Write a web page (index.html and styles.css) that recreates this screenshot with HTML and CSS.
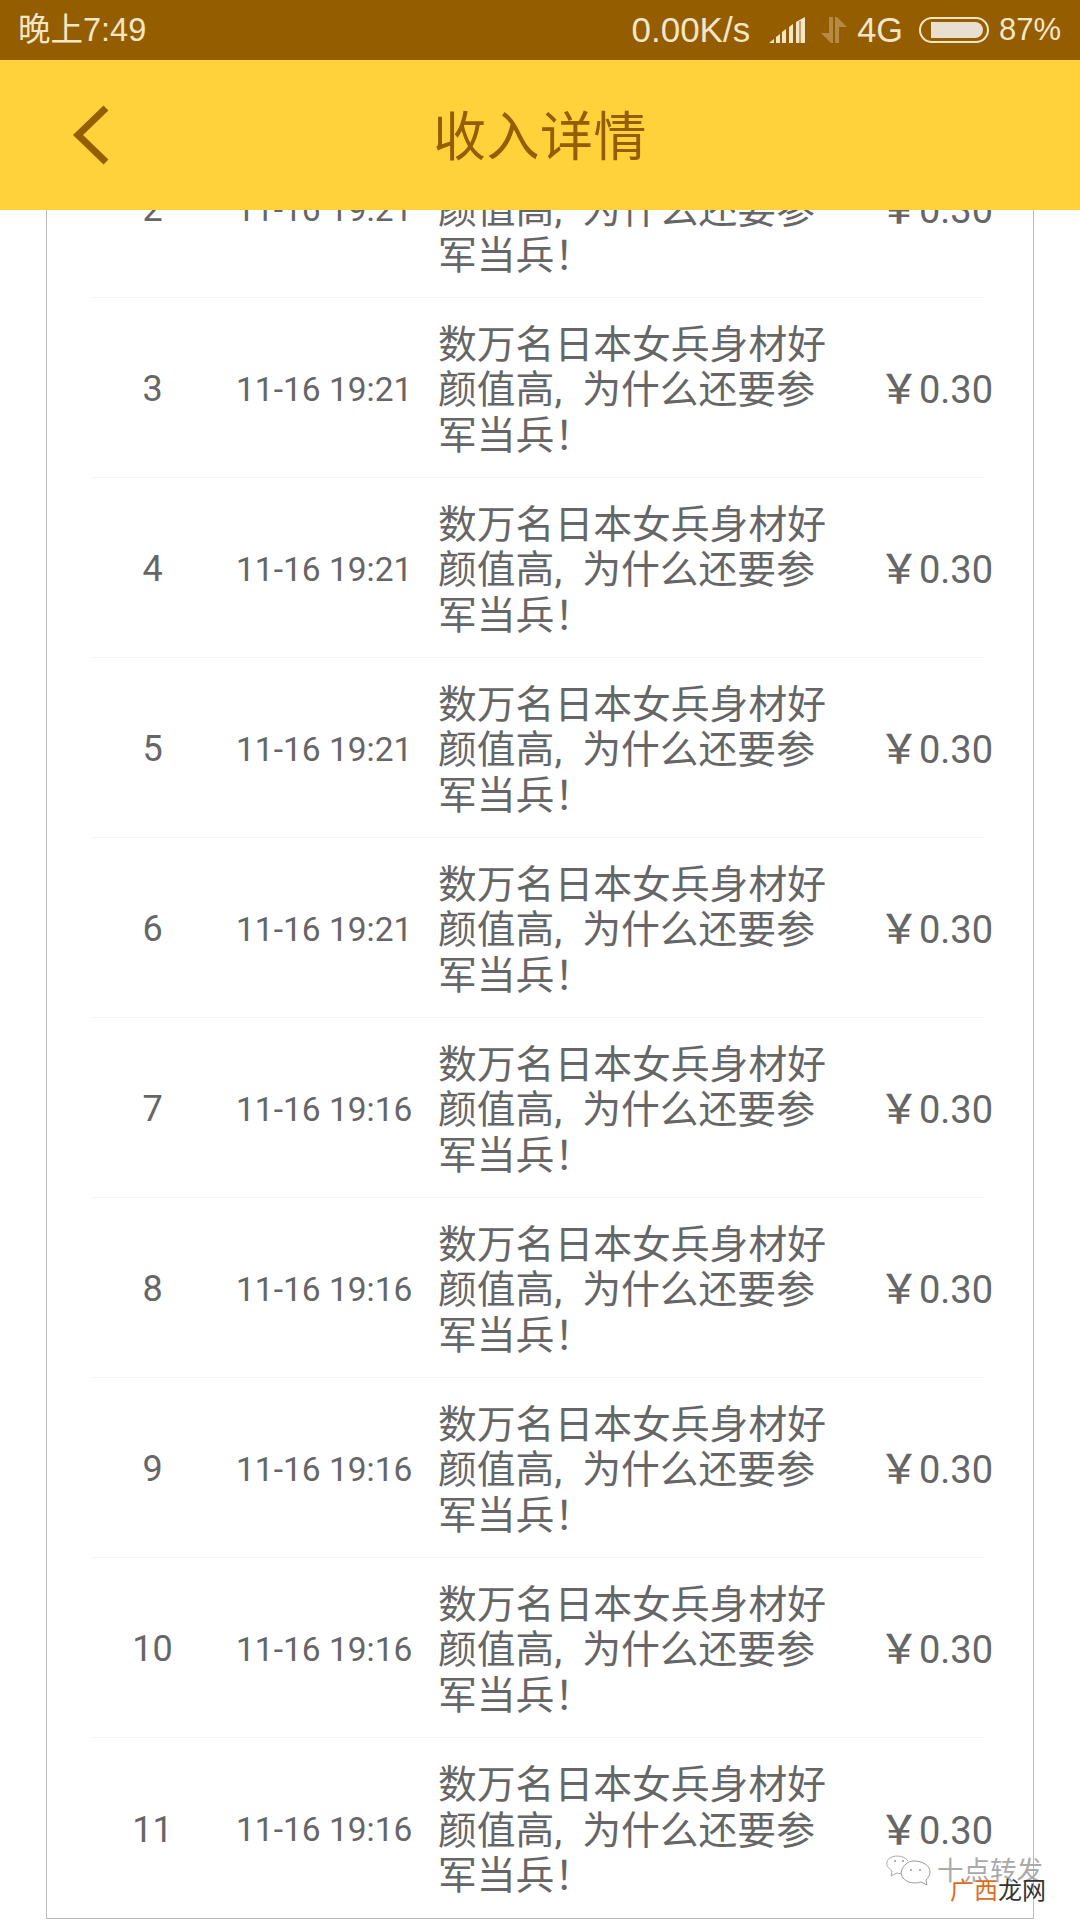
FILE: index.html
```html
<!DOCTYPE html>
<html lang="zh">
<head>
<meta charset="utf-8">
<title>收入详情</title>
<link rel="stylesheet" href="styles.css">
</head>
<body>
<div class="screen">
  <div class="status">
    <span class="clock">晚上7:49</span>
    <div class="status-right">
      <span class="speed">0.00K/s</span>
      <svg class="signal" width="37" height="26" viewBox="0 0 37 26"><path fill="#f5e6c8" d="M0 26l5-4v4zM7 20l4-3v9H7zM13 15l4-3v14h-4zM20 10l4-3v19h-4zM27 5l9-5v26h-9z"/><path fill="#935d00" d="M30.500 4h1v22h-1z"/></svg>
      <svg class="data" width="27" height="26" viewBox="0 0 27 26"><path fill="#b58a45" d="M9 0h4v26h-2L1 16h8zM15 0h2l10 10h-8v16h-4z"/></svg>
      <span class="net">4G</span>
      <div class="battery"><div class="battery-fill"></div></div>
      <span class="pct">87%</span>
    </div>
  </div>
  <header class="bar">
    <svg class="back" width="38" height="60" viewBox="0 0 38 60"><path d="M35 3L7 30l28 27" fill="none" stroke="#935d00" stroke-width="7"/></svg>
    <h1 class="title">收入详情</h1>
  </header>
  <main class="view">
    <div class="panel">
      <div class="row"><span class="num">2</span><span class="date">11-16 19:21</span><span class="desc">数万名日本女兵身材好颜值高, 为什么还要参军当兵！</span><span class="price"><i>￥</i>0.30</span></div>
      <div class="row"><span class="num">3</span><span class="date">11-16 19:21</span><span class="desc">数万名日本女兵身材好颜值高, 为什么还要参军当兵！</span><span class="price"><i>￥</i>0.30</span></div>
      <div class="row"><span class="num">4</span><span class="date">11-16 19:21</span><span class="desc">数万名日本女兵身材好颜值高, 为什么还要参军当兵！</span><span class="price"><i>￥</i>0.30</span></div>
      <div class="row"><span class="num">5</span><span class="date">11-16 19:21</span><span class="desc">数万名日本女兵身材好颜值高, 为什么还要参军当兵！</span><span class="price"><i>￥</i>0.30</span></div>
      <div class="row"><span class="num">6</span><span class="date">11-16 19:21</span><span class="desc">数万名日本女兵身材好颜值高, 为什么还要参军当兵！</span><span class="price"><i>￥</i>0.30</span></div>
      <div class="row"><span class="num">7</span><span class="date">11-16 19:16</span><span class="desc">数万名日本女兵身材好颜值高, 为什么还要参军当兵！</span><span class="price"><i>￥</i>0.30</span></div>
      <div class="row"><span class="num">8</span><span class="date">11-16 19:16</span><span class="desc">数万名日本女兵身材好颜值高, 为什么还要参军当兵！</span><span class="price"><i>￥</i>0.30</span></div>
      <div class="row"><span class="num">9</span><span class="date">11-16 19:16</span><span class="desc">数万名日本女兵身材好颜值高, 为什么还要参军当兵！</span><span class="price"><i>￥</i>0.30</span></div>
      <div class="row"><span class="num">10</span><span class="date">11-16 19:16</span><span class="desc">数万名日本女兵身材好颜值高, 为什么还要参军当兵！</span><span class="price"><i>￥</i>0.30</span></div>
      <div class="row"><span class="num">11</span><span class="date">11-16 19:16</span><span class="desc">数万名日本女兵身材好颜值高, 为什么还要参军当兵！</span><span class="price"><i>￥</i>0.30</span></div>
    </div>
  </main>
  <div class="mark">
    <svg class="mark-icon" width="46" height="32" viewBox="0 0 46 32"><path d="M19 18c-2 1-6 1-8 0l-6 3 1-5C2 13 0 10 1 7c1-4 6-6 10-6 5 0 9 2 11 5" fill="#fff" stroke="#aaa" stroke-width="1"/><path d="M28 6c8 0 16 4 16 11 0 3-2 6-4 8l1 5-6-3c-6 2-14 1-18-4-3-4-2-10 3-14 2-2 5-3 8-3z" fill="#fff" stroke="#999" stroke-width="1"/><path d="M24 15h2M33 15h2M8 6h2M16 6h2" stroke="#999" stroke-width="1.500"/></svg>
    <span class="mark-name">十点转发</span>
    <span class="mark-site"><b>广西</b>龙网</span>
  </div>
</div>
</body>
</html>
```
FILE: styles.css
```css
* { box-sizing: border-box; }
html, body { margin: 0; padding: 0; }
body { width: 1080px; height: 1920px; overflow: hidden; background: #fff; font-family: Roboto, "Noto Sans CJK SC", sans-serif; }
.screen { position: relative; width: 1080px; height: 1920px; display: flex; flex-direction: column; overflow: hidden; }
.status { flex: 0 0 60px; background: #935d00; color: #f5e6c8; display: flex; align-items: center; justify-content: space-between; padding: 0 19px 0 18px; font-family: "Liberation Sans", "Noto Sans CJK SC", sans-serif; }
.clock { font-size: 32.500px; line-height: 40px; }
.status-right { display: flex; align-items: center; line-height: 40px; }
.speed { font-size: 35px; margin-right: 19px; }
.signal { margin-right: 14px; }
.data { margin-right: 10px; }
.net { font-size: 34.300px; margin-right: 16px; }
.battery { width: 70px; height: 26px; border: 2px solid #f5e6c8; border-radius: 13px; padding: 3px 4px 3px 10px; margin-right: 10px; }
.battery-fill { width: 100%; height: 100%; background: #e8dfd0; border-radius: 0 9px 9px 0; }
.pct { font-size: 31px; }
.bar { flex: 0 0 150px; position: relative; z-index: 1; background: #ffd23c; display: flex; align-items: center; justify-content: center; }
.back { position: absolute; left: 71px; top: 45px; }
.title { margin: 0; padding-top: 6px; font-size: 53px; font-weight: 400; color: #935d00; line-height: 1; letter-spacing: 0.500px; }
.view { flex: 1; overflow: hidden; }
.panel { width: 988px; margin: -93px 0 0 46px; border: 1px solid #bbb; padding: 0 48px 0 46px; background: #fff; }
.row { height: 180px; display: flex; align-items: center; color: #666; border-bottom: 1px solid #f3f3f3; }
.row:last-child { border-bottom: 0; }
.num { width: 95px; margin-left: 12px; padding-top: 3px; text-align: center; font-size: 36px; }
.date { width: 236px; margin-left: -12px; padding: 3px 0 0 48px; font-size: 33.500px; white-space: nowrap; }
.desc { width: 396px; margin-left: 14px; padding-top: 5px; font-size: 38.800px; line-height: 45.500px; word-spacing: 10.500px; color: #666; }
.price { margin-left: auto; margin-right: -8px; padding-top: 5px; font-size: 38px; line-height: 46px; white-space: nowrap; }
.price i { font-style: normal; font-size: 40px; font-weight: 500; }
.mark { position: absolute; left: 886px; top: 1855px; width: 190px; height: 62px; }
.mark-icon { position: absolute; left: 0; top: 0; }
.mark-name { position: absolute; left: 51px; top: 0; font-size: 26.500px; line-height: 32px; color: #aaa; white-space: nowrap; }
.mark-site { position: absolute; left: 64px; top: 22px; font-size: 24px; line-height: 28px; color: #333; white-space: nowrap; }
.mark-site b { font-weight: 400; color: #e06a1e; }
```
